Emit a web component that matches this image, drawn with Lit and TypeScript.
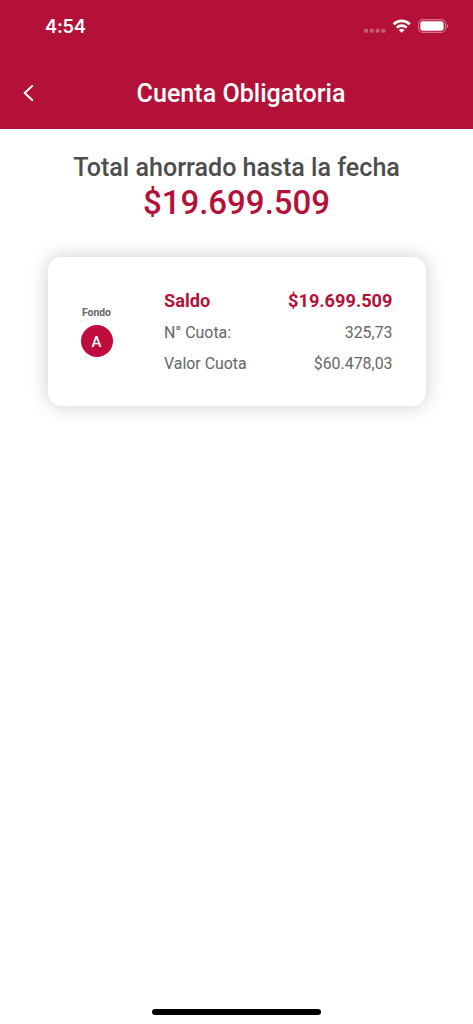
import { LitElement, html, css } from "lit";
import { customElement, property } from "lit/decorators.js";

@customElement("status-bar")
class StatusBar extends LitElement {
  static styles = css`
    :host {
      display: flex;
      justify-content: space-between;
      align-items: center;
      box-sizing: border-box;
      height: 52px;
      padding: 0 25px 0 45px;
      color: #fff;
    }
    .time {
      font: 600 18.3px/24px Inter, sans-serif;
      letter-spacing: -0.25px;
    }
    .icons {
      display: block;
    }
  `;
  render() {
    return html`
      <span class="time">4:54</span>
      <svg class="icons" width="85" height="20" viewBox="363 16 85 20" fill="#fff">
        <g opacity="0.3">
          <rect x="364" y="28.7" width="4" height="4" rx="1.2" />
          <rect x="369.8" y="28.7" width="4" height="4" rx="1.2" />
          <rect x="375.6" y="28.7" width="4" height="4" rx="1.2" />
          <rect x="381.4" y="28.7" width="4" height="4" rx="1.2" />
        </g>
        <g fill="none" stroke="#fff" stroke-width="2.7">
          <path d="M393.6 24.2a11.7 11.7 0 0 1 16.2 0" />
          <path d="M396.7 27.6a7.2 7.2 0 0 1 10 0" />
        </g>
        <path d="M401.7 32.6l-2.5-2.5a3.7 3.7 0 0 1 5 0z" stroke="#fff" stroke-width=".5" stroke-linejoin="round" />
        <rect x="418.6" y="19.6" width="26.8" height="12.8" rx="4" fill="none" stroke="#fff" stroke-opacity="0.42" stroke-width="1.1" />
        <rect x="420.3" y="21.2" width="23.3" height="9.6" rx="2.4" />
        <path d="M446.7 24v4.2c.9-.3 1.4-1.1 1.4-2.1s-.5-1.8-1.4-2.1z" opacity="0.45" />
      </svg>
    `;
  }
}

@customElement("nav-header")
class NavHeader extends LitElement {
  @property() heading = "";
  static styles = css`
    :host {
      display: grid;
      grid-template-columns: 56px 1fr 56px;
      align-items: center;
      height: 77px;
      box-sizing: border-box;
      padding-top: 7px;
      color: #fff;
    }
    .back {
      display: block;
      margin-left: 20px;
      margin-top: -2px;
    }
    .title {
      margin: 0;
      font: 500 25.1px/32px Roboto, sans-serif;
      text-align: center;
      padding-left: 9px;
    }
  `;
  render() {
    return html`
      <svg class="back" width="16" height="20" viewBox="0 0 16 20" fill="none" stroke="#fff" stroke-width="2" stroke-linecap="round" stroke-linejoin="round">
        <path d="M12.2 3L4.6 10l7.6 7" />
      </svg>
      <h1 class="title">${this.heading}</h1>
    `;
  }
}

@customElement("fund-card")
class FundCard extends LitElement {
  @property() fund = "";
  @property({ attribute: false }) rows: [string, string][] = [];
  static styles = css`
    :host {
      display: flex;
      box-sizing: border-box;
      height: 149px;
      margin: 33px 47.5px 0;
      padding: 28px 33px 0;
      border-radius: 14px;
      background: #fff;
      box-shadow: 0 0 20px rgba(0, 0, 0, 0.2);
      font-family: Roboto, sans-serif;
    }
    .fund {
      display: flex;
      flex-direction: column;
      align-items: center;
      width: 32px;
      padding-top: 21px;
    }
    .label {
      font-size: 10.4px;
      line-height: 14px;
      font-weight: 700;
      color: #666;
    }
    .badge {
      width: 32px;
      height: 32px;
      margin-top: 5px;
      border-radius: 50%;
      background: #bf0c3d;
      color: #fff;
      font-size: 15px;
      line-height: 34px;
      font-weight: 500;
      text-align: center;
    }
    .rows {
      flex: 1;
      margin-left: 51.5px;
    }
    .row {
      display: flex;
      justify-content: space-between;
      font-size: 15.9px;
      line-height: 31px;
      color: #666;
    }
    .row:first-child {
      font-size: 18.2px;
      line-height: 32px;
      font-weight: 700;
      color: #b41139;
    }
  `;
  render() {
    return html`
      <div class="fund">
        <span class="label">Fondo</span>
        <span class="badge">${this.fund}</span>
      </div>
      <div class="rows">
        ${this.rows.map(([k, v]) => html`<div class="row"><span>${k}</span><span>${v}</span></div>`)}
      </div>
    `;
  }
}

@customElement("app-root")
class AppRoot extends LitElement {
  static styles = css`
    :host {
      display: flex;
      flex-direction: column;
      height: 1024px;
      overflow: hidden;
      background: #fff;
      font-family: Roboto, sans-serif;
    }
    .top {
      background: #b41139;
    }
    .summary {
      padding-top: 23px;
      text-align: center;
      font-weight: 500;
    }
    .caption {
      font-size: 25.1px;
      line-height: 32px;
      color: #4d4d4b;
    }
    .total {
      font-size: 33px;
      line-height: 40px;
      margin-top: -1px;
      margin-bottom: 1px;
      color: #b41139;
    }
    .home {
      width: 169px;
      height: 6px;
      margin: auto auto 9px;
      border-radius: 3px;
      background: #000;
    }
  `;
  private rows: [string, string][] = [
    ["Saldo", "$19.699.509"],
    ["N° Cuota:", "325,73"],
    ["Valor Cuota", "$60.478,03"],
  ];
  render() {
    return html`
      <header class="top">
        <status-bar></status-bar>
        <nav-header heading="Cuenta Obligatoria"></nav-header>
      </header>
      <section class="summary">
        <div class="caption">Total ahorrado hasta la fecha</div>
        <div class="total">$19.699.509</div>
      </section>
      <fund-card fund="A" .rows=${this.rows}></fund-card>
      <div class="home"></div>
    `;
  }
}
